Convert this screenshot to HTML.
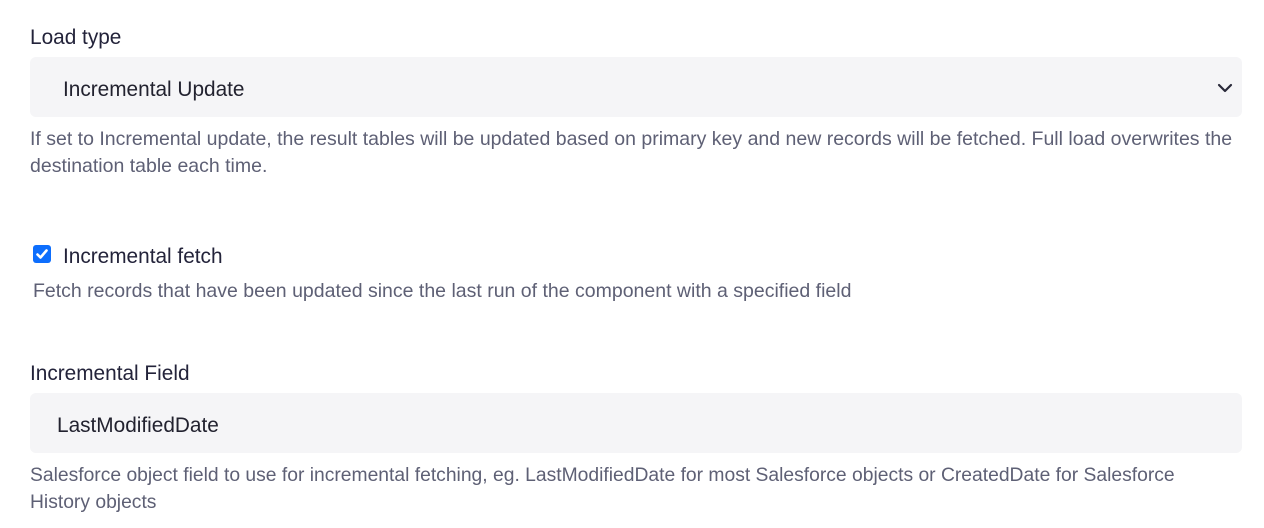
<!DOCTYPE html>
<html><head><style>
body{margin:0;background:#fff;font-family:"Liberation Sans",sans-serif;width:1264px;height:528px;overflow:hidden;position:relative}
.a{position:absolute;white-space:nowrap}
.lbl{font-size:20.8px;color:#23233a}
.help{font-size:19.5px;color:#5e6075;line-height:27px}
.box{position:absolute;left:30px;width:1212px;height:60px;background:#f5f5f7;border-radius:6px}
</style></head><body>
<div class="a lbl" style="left:30px;top:26px">Load type</div>
<div class="box" style="top:57px"></div>
<div class="a lbl" style="left:63px;top:78px;color:#22222f">Incremental Update</div>
<svg class="a" style="left:1217px;top:82px" width="16" height="12" viewBox="0 0 16 12"><path d="M2 3 L8 9 L14 3" fill="none" stroke="#2a2a3a" stroke-width="2.2" stroke-linecap="round" stroke-linejoin="round"/></svg>
<div class="a help" style="left:30px;top:126px">If set to Incremental update, the result tables will be updated based on primary key and new records will be fetched. Full load overwrites the<br>destination table each time.</div>
<div class="a" style="left:33px;top:245px;width:18px;height:18px;background:#0d6efd;border-radius:3px">
<svg width="18" height="18" viewBox="0 0 18 18"><path d="M4.5 9.5 L7.5 12.5 L13.5 5.5" fill="none" stroke="#fff" stroke-width="2.6" stroke-linecap="round" stroke-linejoin="round"/></svg></div>
<div class="a lbl" style="left:63px;top:245px">Incremental fetch</div>
<div class="a help" style="left:33px;top:278px">Fetch records that have been updated since the last run of the component with a specified field</div>
<div class="a lbl" style="left:30px;top:362px">Incremental Field</div>
<div class="box" style="top:393px"></div>
<div class="a lbl" style="left:57px;top:414px;color:#22222f">LastModifiedDate</div>
<div class="a help" style="left:30px;top:462px;font-size:19.3px">Salesforce object field to use for incremental fetching, eg. LastModifiedDate for most Salesforce objects or CreatedDate for Salesforce<br>History objects</div>
</body></html>
